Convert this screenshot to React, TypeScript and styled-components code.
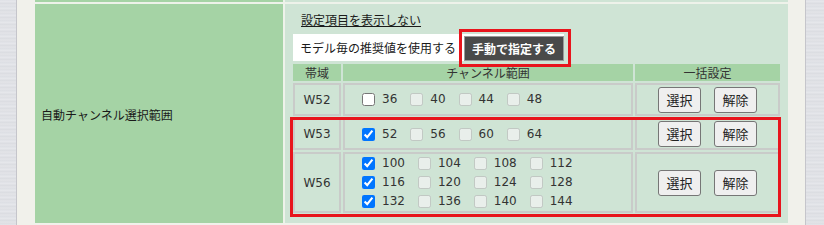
import React from "react";
import styled, { createGlobalStyle } from "styled-components";

const Global = createGlobalStyle`
  html, body { margin: 0; padding: 0; background: #f1f1eb; }
  body {
    font-family: "DejaVu Sans", "Noto Sans CJK JP", sans-serif;
    font-size: 12px;
    color: #222;
  }
  * { box-sizing: border-box; }
`;

const Page = styled.div`
  display: flex;
  width: 824px;
  height: 225px;
  overflow: hidden;
  background: #f1f1eb;
`;

const Strip = styled.div<{ $side: "left" | "right" }>`
  flex: none;
  width: ${(p) => (p.$side === "left" ? "17px" : "19px")};
  height: 100%;
  background: repeating-linear-gradient(
    180deg,
    #dfe1e6 0px,
    #e7e8ec 2px,
    #d9dbe0 3px,
    #e3e4e8 5px,
    #dcdee3 7px
  );
  border-${(p) => (p.$side === "left" ? "right" : "left")}: 1px solid #c5c5cb;
`;

const FormTable = styled.div`
  flex: none;
  display: grid;
  grid-template-columns: 248px 503px;
  grid-template-rows: 2px 219px;
  gap: 2px;
  background: #eef2ea;
  margin: 0 17px 0 18px;
  align-self: flex-start;
`;

const LabelCell = styled.div`
  background: #a5d3a5;
  display: flex;
  align-items: center;
  padding-left: 6px;
  font-family: "Noto Sans CJK JP", sans-serif;
  font-size: 12px;
  color: #1a1a1a;
  padding-top: 1px;
`;

const PanelCell = styled.div<{ $stub?: boolean }>`
  background: #cfe4d5;
  padding: ${(p) => (p.$stub ? "0" : "7px 8px 0 8px")};
  display: flex;
  flex-direction: column;
  align-items: flex-start;
`;

const LinkRow = styled.div`
  line-height: 18px;
  padding-left: 8px;
  font-family: "Noto Sans CJK JP", sans-serif;
  a {
    color: #1a1a1a;
    text-decoration: underline;
    text-underline-offset: 1px;
  }
`;

const Segmented = styled.div`
  margin-top: 5px;
  height: 27px;
  display: flex;
  align-items: flex-end;
  background: #fff;
  font-family: "Noto Sans CJK JP", sans-serif;
`;

const SegOption = styled.div`
  align-self: stretch;
  line-height: 27px;
  padding: 0 8px 0 7px;
  color: #1a1a1a;
`;

const SegSelectedWrap = styled.div`
  position: relative;
`;

const SegSelected = styled.div`
  width: 100px;
  height: 25px;
  line-height: 23px;
  text-align: center;
  background: #4a4a4a;
  border: 1px solid #9a9a9a;
  color: #fff;
  font-weight: bold;
`;

const Highlight = styled.div`
  position: absolute;
  z-index: 2;
  border: 3px solid #e8141c;
  pointer-events: none;
`;

const ButtonHighlight = styled(Highlight)`
  top: -7px;
  left: -5px;
  right: -7px;
  bottom: -6px;
`;

const RowsHighlight = styled(Highlight)`
  top: 53px;
  left: -3px;
  width: 491px;
  height: 100px;
`;

const ChannelTable = styled.div`
  position: relative;
  margin-top: 3px;
  display: grid;
  grid-template-columns: 48px 290px 145px;
  grid-template-rows: 17px 33px 32px 61px;
  gap: 2px;
`;

const HeadCell = styled.div`
  background: #a5d3a5;
  text-align: center;
  line-height: 17px;
  color: #333;
  font-family: "Noto Sans CJK JP", sans-serif;
`;

const BodyCell = styled.div<{ $align: "center" | "start" }>`
  border: 2px solid #c9cbc9;
  display: flex;
  align-items: center;
  justify-content: ${(p) => (p.$align === "center" ? "center" : "flex-start")};
  padding-left: ${(p) => (p.$align === "center" ? "0" : "17px")};
  gap: 13px;
  color: #333;
`;

const ChannelRows = styled.div`
  display: flex;
  flex-direction: column;
`;

const ChannelRow = styled.div`
  display: flex;
  height: 19px;
  align-items: center;
`;

const ChannelItem = styled.label`
  display: flex;
  align-items: center;
  margin-right: 13px;
  line-height: 19px;
  input {
    width: 13px;
    height: 13px;
    margin: 0 7px 0 0;
  }
`;

const BulkButton = styled.button`
  width: 43px;
  height: 26px;
  padding: 0;
  border: 1px solid #767676;
  border-radius: 3px;
  background: #efefef;
  color: #222;
  font-family: "Noto Sans CJK JP", sans-serif;
  font-size: 13px;
  line-height: 24px;
`;

type Ch = { n: number; enabled: boolean; checked: boolean };

const bands: { name: string; rows: Ch[][] }[] = [
  {
    name: "W52",
    rows: [
      [
        { n: 36, enabled: true, checked: false },
        { n: 40, enabled: false, checked: false },
        { n: 44, enabled: false, checked: false },
        { n: 48, enabled: false, checked: false },
      ],
    ],
  },
  {
    name: "W53",
    rows: [
      [
        { n: 52, enabled: true, checked: true },
        { n: 56, enabled: false, checked: false },
        { n: 60, enabled: false, checked: false },
        { n: 64, enabled: false, checked: false },
      ],
    ],
  },
  {
    name: "W56",
    rows: [
      [100, 104, 108, 112],
      [116, 120, 124, 128],
      [132, 136, 140, 144],
    ].map((r) =>
      r.map((n, i) => ({ n, enabled: i === 0, checked: i === 0 }))
    ),
  },
];

export default function App() {
  return (
    <>
      <Global />
      <Page>
        <Strip $side="left" />
        <FormTable>
          <LabelCell />
          <PanelCell $stub />
          <LabelCell>自動チャンネル選択範囲</LabelCell>
          <PanelCell>
            <LinkRow>
              <a href="#">設定項目を表示しない</a>
            </LinkRow>
            <Segmented>
              <SegOption>モデル毎の推奨値を使用する</SegOption>
              <SegSelectedWrap>
                <SegSelected>手動で指定する</SegSelected>
                <ButtonHighlight />
              </SegSelectedWrap>
            </Segmented>
            <ChannelTable>
              <HeadCell>帯域</HeadCell>
              <HeadCell>チャンネル範囲</HeadCell>
              <HeadCell>一括設定</HeadCell>
              {bands.map((b) => (
                <React.Fragment key={b.name}>
                  <BodyCell $align="center">{b.name}</BodyCell>
                  <BodyCell $align="start">
                    <ChannelRows>
                      {b.rows.map((row, ri) => (
                        <ChannelRow key={ri}>
                          {row.map((c) => (
                            <ChannelItem key={c.n}>
                              <input
                                type="checkbox"
                                defaultChecked={c.checked}
                                disabled={!c.enabled}
                              />
                              <span>{c.n}</span>
                            </ChannelItem>
                          ))}
                        </ChannelRow>
                      ))}
                    </ChannelRows>
                  </BodyCell>
                  <BodyCell $align="center">
                    <BulkButton>選択</BulkButton>
                    <BulkButton>解除</BulkButton>
                  </BodyCell>
                </React.Fragment>
              ))}
              <RowsHighlight />
            </ChannelTable>
          </PanelCell>
        </FormTable>
        <Strip $side="right" />
      </Page>
    </>
  );
}
